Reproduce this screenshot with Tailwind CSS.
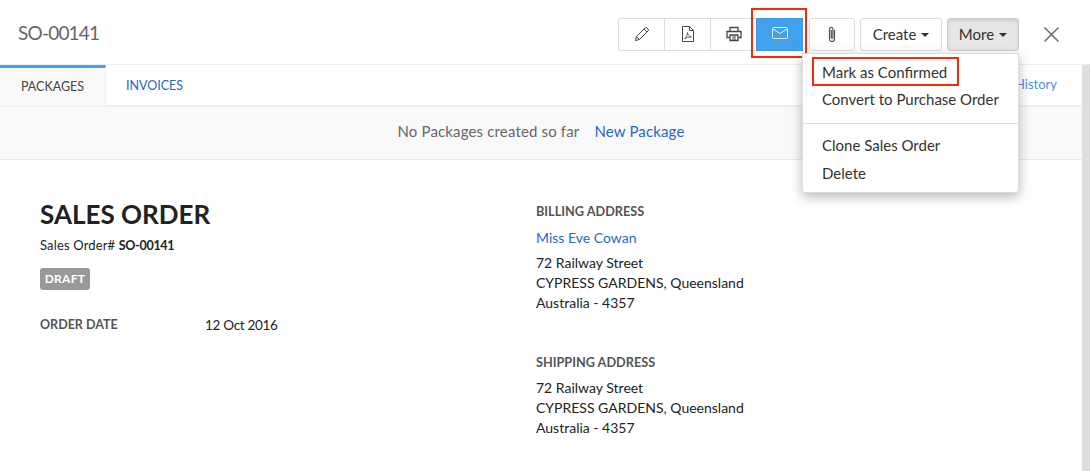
<!DOCTYPE html>
<html lang="en">
<head>
    <meta charset="UTF-8">
    <title>SO-00141</title>
    <script src="https://cdn.jsdelivr.net/npm/@tailwindcss/browser@4"></script>
</head>
<body class="relative bg-white w-[1090px] h-[471px] overflow-hidden font-['Lato',sans-serif] text-[14px] text-[#222]">
    <!-- top bar -->
    <div class="h-[65px] border-b border-[#eee] flex items-center pl-[18px]">
        <h1 class="text-[19px] tracking-[-0.8px] text-[#666] leading-none">SO-00141</h1>
        <div class="ml-auto flex items-center mt-[4px]">
            <div class="flex h-[33px] border border-[#ddd] rounded-l-[3px] border-r-0">
                <button class="w-[46px] flex items-center justify-center border-r border-[#ddd]">
                    <svg class="w-[16px] h-[16px]" viewBox="0 0 16 16" fill="none" stroke="#444" stroke-width="1"><path d="M1.500 14.500l1-4L11 2a1.400 1.400 0 0 1 2 0l1 1a1.400 1.400 0 0 1 0 2l-8.500 8.500z"/><path d="M2.500 10.500l3 3M10 3l3 3"/></svg>
                </button>
                <button class="w-[46px] flex items-center justify-center border-r border-[#ddd]">
                    <svg class="w-[14px] h-[16px]" viewBox="0 0 14 16" fill="none" stroke="#444" stroke-width="1"><path d="M1.500 .5h7l4 4v11h-11z"/><path d="M8.500 .5v4h4"/><path d="M3.500 12.500c2-1 3-4 3-6 0 2 1.500 4 4 4.500-2 0-5 .5-7 1.500z" stroke-width=".8"/></svg>
                </button>
                <button class="w-[45px] flex items-center justify-center">
                    <svg class="w-[16px] h-[16px]" viewBox="0 0 16 16" fill="none" stroke="#444" stroke-width="1.300"><path d="M4 5V1.500h8V5"/><path d="M3.500 11.500h-2.500V5.500h14v6h-2.500"/><path d="M4 9h8v5.500H4z"/><path d="M6 11h4M6 13h4" stroke-width="1"/></svg>
                </button>
            </div>
            <button class="relative w-[47px] h-[33px] bg-[#42a1ec] border border-[#3f97dd] flex items-center justify-center">
                <svg class="w-[16px] h-[12px] -mt-[2px]" viewBox="0 0 16 12" fill="none" stroke="#e8f3fd" stroke-width="1"><rect x=".5" y=".5" width="15" height="11" rx="1"/><path d="M1 2l7 4.500L15 2"/></svg>
                <span class="absolute -left-[6px] -top-[11px] w-[56px] h-[50px] border-[2px] border-[#f5290c]"></span>
            </button>
            <button class="ml-[6px] w-[46px] h-[33px] border border-[#ddd] rounded-[3px] flex items-center justify-center">
                <svg class="w-[10px] h-[17px]" viewBox="0 0 10 17" fill="none" stroke="#555" stroke-width="1.200"><path d="M7.500 4v9a2.500 2.500 0 0 1-5 0V3a1.700 1.700 0 0 1 3.400 0v8.500a.8.8 0 0 1-1.600 0V4"/></svg>
            </button>
            <button class="ml-[5px] w-[82px] h-[33px] border border-[#ddd] rounded-[3px] flex items-center justify-center gap-[5px] text-[15px] text-[#333]">
                Create <span class="border-x-[4px] border-x-transparent border-t-[4px] border-t-[#333] mt-[1px]"></span>
            </button>
            <button class="ml-[5px] w-[72px] h-[33px] border border-[#ccc] bg-[#e6e6e6] shadow-[inset_0_2px_3px_rgba(0,0,0,0.1)] rounded-[3px] flex items-center justify-center gap-[5px] text-[15px] text-[#333]">
                More <span class="border-x-[4px] border-x-transparent border-t-[4px] border-t-[#333] mt-[1px]"></span>
            </button>
            <button class="ml-[25px] mr-[31px] w-[15px] h-[15px]">
                <svg class="w-[15px] h-[15px]" viewBox="0 0 16 16" stroke="#666" stroke-width="1.500"><path d="M.5 .5l15 15M15.500 .5l-15 15"/></svg>
            </button>
        </div>
    </div>

    <div class="flex">
        <div class="w-[1082px] shrink-0">
            <!-- tabs -->
            <div class="h-[42px] border-b-2 border-[#eee] flex pr-[25px] text-[12.500px] uppercase">
                <div class="w-[106px] h-[41px] bg-[#f9f9f9] border-t-[3px] border-[#42a1ec] border-r border-r-[#eee] flex items-center justify-center text-[#444]">Packages</div>
                <div class="ml-[20px] pt-[3px] flex items-center text-[#2a66c9]">Invoices</div>
                <div class="ml-auto flex items-center normal-case text-[13px] text-[#4a90e2]">History</div>
            </div>

            <!-- banner -->
            <div class="h-[53px] bg-[#f9f9f9] border-b border-[#e8e8e8] flex items-center justify-center gap-[15px] text-[15px] tracking-[0.15px] pb-[3px] text-[#666]">
                <span>No Packages created so far</span>
                <a class="text-[#2a66c9]">New Package</a>
            </div>

            <!-- order details -->
            <div class="flex pl-[40px] pt-[39px]">
                <div class="w-[496px] shrink-0">
                    <h2 class="text-[26px] leading-[30px] font-bold text-[#222]">SALES ORDER</h2>
                    <p class="mt-[8px] text-[13px] tracking-[0.15px] leading-[16px]">Sales Order# <b class="text-[12.500px] tracking-[-0.3px]">SO-00141</b></p>
                    <span class="inline-block mt-[14px] w-[50px] h-[22px] rounded-[3px] bg-[#999] text-white text-[12px] font-bold leading-[22px] text-center tracking-[0.3px]">DRAFT</span>
                    <div class="flex mt-[25px] text-[12.500px] leading-[20px]">
                        <span class="w-[165px] font-bold text-[#555]">ORDER DATE</span>
                        <span class="text-[13.500px] tracking-[-0.3px]">12 Oct 2016</span>
                    </div>
                </div>
                <div class="text-[14px] leading-[20px] mt-[2px]">
                    <h3 class="text-[12.700px] font-bold text-[#555]">BILLING ADDRESS</h3>
                    <a class="block mt-[7px] text-[#2a66c9]">Miss Eve Cowan</a>
                    <p class="mt-[5px]">72 Railway Street<br>CYPRESS GARDENS, Queensland<br>Australia - 4357</p>
                    <h3 class="mt-[39px] text-[12.700px] font-bold text-[#555]">SHIPPING ADDRESS</h3>
                    <p class="mt-[6px]">72 Railway Street<br>CYPRESS GARDENS, Queensland<br>Australia - 4357</p>
                </div>
            </div>
        </div>
        <!-- scrollbar track -->
        <div class="w-[8px] h-[406px] bg-[#dedede]"></div>
    </div>

    <!-- More dropdown -->
    <div class="absolute left-[802px] top-[53px] w-[217px] h-[140px] bg-white border border-[#ddd] rounded-b-[3px] shadow-[0_4px_12px_rgba(0,0,0,0.28)] text-[15px] text-[#333]">
        <div class="relative pl-[19px] pt-[5px] leading-[27px]">
            <span class="absolute left-[9px] top-[3px] w-[147px] h-[29px] border-[2px] border-[#f5290c]"></span>
            Mark as Confirmed
        </div>
        <div class="pl-[19px] leading-[27px]">Convert to Purchase Order</div>
        <div class="border-t border-[#ddd] mt-[10px] mb-[8px]"></div>
        <div class="pl-[19px] leading-[27px]">Clone Sales Order</div>
        <div class="pl-[19px] leading-[28px]">Delete</div>
    </div>
</body>
</html>
